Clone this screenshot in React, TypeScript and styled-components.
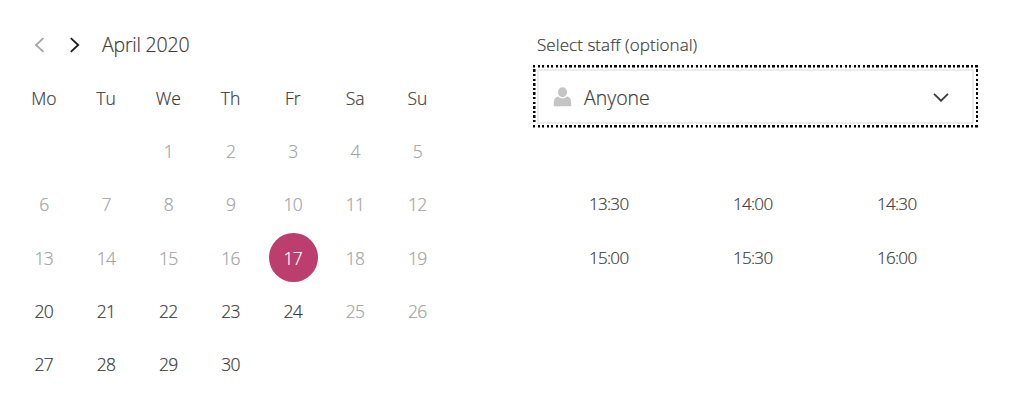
import React from "react";
import styled, { createGlobalStyle } from "styled-components";

const GlobalStyle = createGlobalStyle`
  body {
    margin: 0;
    background: #fff;
    color: #3c3c3c;
    font-family: "Open Sans", "Noto Sans", sans-serif;
    font-weight: 300;
    -webkit-text-stroke: 0.2px currentColor;
  }
  * { box-sizing: border-box; }
  button { font: inherit; color: inherit; background: none; border: 0; padding: 0; }
`;

const Page = styled.main`
  display: flex;
  width: 1013px;
  height: 400px;
  padding-left: 13px;
  overflow: hidden;
`;

const Calendar = styled.section`
  width: 435.75px;
  padding-top: 28px;
`;

const MonthBar = styled.header`
  display: flex;
  align-items: center;
  height: 34px;
  margin-bottom: 10px;
  padding-left: 20px;
`;

const NavButton = styled.button<{ $muted?: boolean }>`
  display: flex;
  margin-right: 23px;
  color: ${(p) => (p.$muted ? "#a6a6a6" : "#1c1c1c")};
`;

const Text = styled.span<{ $size: number; $track?: number }>`
  font-size: ${(p) => p.$size}px;
  letter-spacing: ${(p) => p.$track ?? 0}px;
  line-height: 1;
  white-space: nowrap;
`;

const Month = styled(Text)`
  margin-left: -1px;
`;

const Grid = styled.div`
  display: grid;
  grid-template-columns: repeat(7, 1fr);
  grid-auto-rows: 53.3px;
`;

const Cell = styled.div<{ $muted?: boolean }>`
  display: flex;
  align-items: center;
  justify-content: center;
  padding-right: 0.6px;
  color: ${(p) => (p.$muted ? "#a3a3a3" : "#3a3a3a")};
`;

const Selected = styled.div`
  display: flex;
  align-items: center;
  justify-content: center;
  flex: none;
  width: 49px;
  height: 49px;
  margin: -2px -0.6px 0 0;
  padding: 2px 0.6px 0 0;
  border-radius: 50%;
  background: #bc3e6e;
  color: #fff;
`;

const Booking = styled.section`
  width: 445px;
  margin-left: 84.25px;
  padding-top: 35px;
`;

const Label = styled.div`
  display: flex;
  align-items: center;
  height: 18px;
  margin-bottom: 12px;
  padding-left: 4px;
`;

const dotsX = "repeating-linear-gradient(90deg, #000 0 2.4px, #fff 2.4px 4.515px)";
const dotsY = "repeating-linear-gradient(180deg, #000 0 2.4px, #fff 2.4px 4.6px)";

const FocusRing = styled.div`
  height: 62.5px;
  padding: 4px;
  background:
    ${dotsX} top / 100% 2.5px no-repeat,
    ${dotsX} bottom / 100% 2.5px no-repeat,
    ${dotsY} left / 2.5px 100% no-repeat,
    ${dotsY} right / 2.5px 100% no-repeat;
`;

const Select = styled.button`
  display: flex;
  align-items: center;
  width: 100%;
  height: 54.5px;
  padding: 2px 23px 0 14px;
  border: 2px solid #ececec;
  background: #fff;
`;

const Name = styled(Text)`
  flex: 1;
  margin-left: 12px;
  text-align: left;
`;

const Times = styled.div`
  display: grid;
  grid-template-columns: repeat(3, 144px);
  grid-auto-rows: 53.3px;
  margin: 49.8px 0 0 4px;
`;

const weekdays = ["Mo", "Tu", "We", "Th", "Fr", "Sa", "Su"];
const days = Array.from({ length: 30 }, (_, i) => i + 1);
const slots = ["13:30", "14:00", "14:30", "15:00", "15:30", "16:00"];
const isClosed = (d: number) => d < 17 || [18, 19, 25, 26].includes(d);

const Chevron = ({ d, w, h }: { d: string; w: number; h: number }) => (
  <svg width={w} height={h} viewBox={`0 0 ${w} ${h}`} fill="none" stroke="currentColor" strokeWidth="1.8">
    <path d={d} />
  </svg>
);

export default function App() {
  return (
    <>
      <GlobalStyle />
      <Page>
        <Calendar>
          <MonthBar>
            <NavButton $muted aria-label="Previous month">
              <Chevron w={12} h={16} d="M10.5 1.2 L3 8 L10.5 14.8" />
            </NavButton>
            <NavButton aria-label="Next month">
              <Chevron w={12} h={16} d="M2.8 1.2 L10.2 8 L2.8 14.8" />
            </NavButton>
            <Month $size={19.5} $track={-0.2}>April 2020</Month>
          </MonthBar>
          <Grid>
            {weekdays.map((d) => (
              <Cell key={d}><Text $size={17.5}>{d}</Text></Cell>
            ))}
            <Cell />
            <Cell />
            {days.map((d) => (
              <Cell key={d} $muted={isClosed(d)}>
                {d === 17 ? (
                  <Selected><Text $size={17.5} $track={-0.7}>{d}</Text></Selected>
                ) : (
                  <Text $size={17.5} $track={-0.6}>{d}</Text>
                )}
              </Cell>
            ))}
          </Grid>
        </Calendar>
        <Booking>
          <Label><Text $size={17} $track={0.06}>Select staff (optional)</Text></Label>
          <FocusRing>
            <Select>
              <svg width="19" height="20" viewBox="0 0 19 20" fill="#c4c4c4">
                <ellipse cx="9.5" cy="5.2" rx="4.5" ry="5" />
                <path d="M0.8 19.2 V15.5 C0.8 12 2.8 9.8 5.2 9.5 C7.5 12 11.5 12 13.8 9.5 C16.5 9.8 18.2 12 18.2 15.5 V19.2 Z" />
              </svg>
              <Name $size={19.5}>Anyone</Name>
              <Chevron w={16} h={10} d="M1 1.9 L8 8.7 L15 1.9" />
            </Select>
          </FocusRing>
          <Times>
            {slots.map((t) => (
              <Cell key={t}><Text $size={17} $track={-0.7}>{t}</Text></Cell>
            ))}
          </Times>
        </Booking>
      </Page>
    </>
  );
}
